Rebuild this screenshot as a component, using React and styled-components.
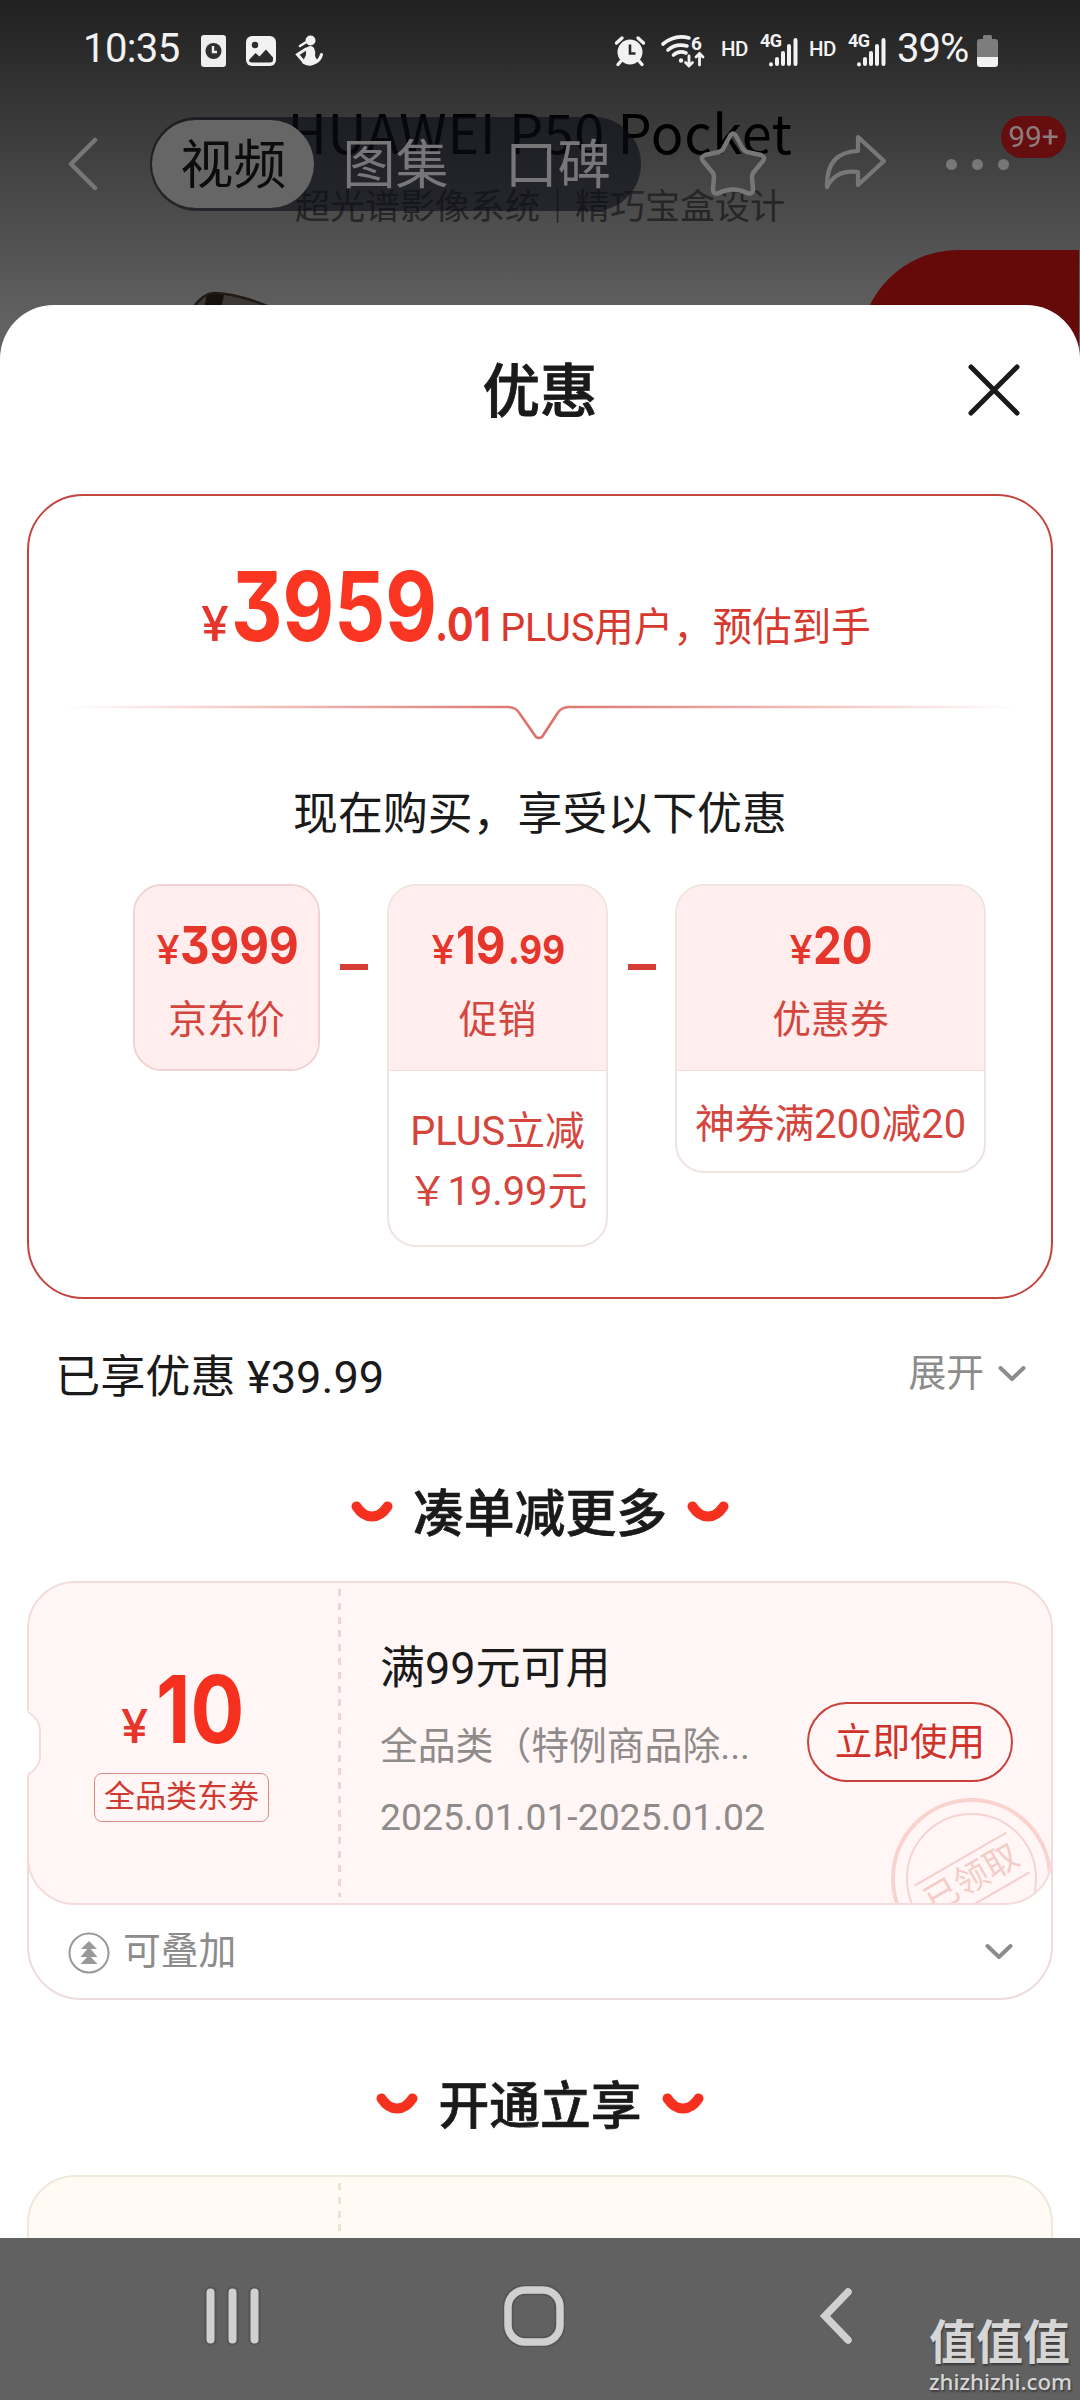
import React from 'react';
import styled, { createGlobalStyle } from 'styled-components';

const GlobalStyle = createGlobalStyle`
   *{
      box-sizing: border-box;
   }
   body{
      margin: 0;
      background: #616161;
      font-family: Roboto, "Noto Sans CJK SC", sans-serif;
   }
`

const Screen = styled.div`
   width: 1080px;
   height: 2400px;
   display: flex;
   flex-direction: column;
   overflow: hidden;
   background: linear-gradient(#202020 0, #383838 115px, #636363 330px, #616161 360px);
`

/* ---------- top of the page, dimmed behind the sheet ---------- */

const Top = styled.header`
   position: relative;
   height: 305px;
   flex: none;
`

const StatusBar = styled.div`
   height: 98px;
   padding: 0 82px 0 83px;
   display: flex;
   align-items: center;
   justify-content: space-between;
   color: #f2f2f2;
   font-size: 40px;
   line-height: 100px;
`

const StatusGroup = styled.div`
   display: flex;
   align-items: center;
   gap: ${props => props.$gap}px;
   height: 100%;
   svg{
      display: block;
      flex: none;
      overflow: visible;
      margin-top: 3px;
   }
`

const Clock = styled.span`
   width: 98px;
   letter-spacing: -0.6px;
`

const Sim = styled.span`
   display: flex;
   align-items: center;
   gap: 12px;
   width: 77px;
   margin-right: -5px;
`

const Hd = styled.span`
   width: 27px;
   font-size: 20.5px;
   font-weight: 500;
   letter-spacing: -0.6px;
`

const Network = styled.span`
   position: relative;
   display: flex;
   height: 98px;
   align-items: center;
   b{
      position: absolute;
      left: 0;
      top: 31px;
      font-size: 18px;
      font-weight: 700;
      line-height: 20px;
      letter-spacing: -0.5px;
   }
`

const Percent = styled.span`
   width: 71px;
   margin-right: -7px;
   letter-spacing: -1px;
`

const NavRow = styled.div`
   position: relative;
   z-index: 1;
   height: 94px;
   margin-top: 19px;
   padding: 0 68px;
   display: flex;
   align-items: center;
   svg{
      flex: none;
   }
`

const Tabs = styled.div`
   width: 491px;
   height: 94px;
   margin-left: 52px;
   padding: 3px 2px;
   display: flex;
   border-radius: 47px;
   background: rgba(12, 12, 24, 0.6);
`

const Tab = styled.div`
   width: 163px;
   height: 88px;
   border-radius: 44px;
   text-align: center;
   font-size: 53px;
   line-height: 92px;
   color: ${props => (props.$active ? '#0c0c0c' : '#77777a')};
   background: ${props => (props.$active ? '#666' : 'none')};
`

const StarWrap = styled.div`
   margin-left: 58px;
   height: 66px;
`

const ShareWrap = styled.div`
   margin-left: 57px;
   height: 60px;
`

const DotsWrap = styled.div`
   margin-left: 60px;
   display: flex;
   gap: 15px;
   i{
      width: 11px;
      height: 11px;
      border-radius: 50%;
      background: #777;
   }
`

const Badge = styled.div`
   position: absolute;
   left: 1001px;
   top: -1px;
   width: 65px;
   height: 42px;
   border-radius: 21px;
   background: #660d0f;
   color: #8d7c7c;
   text-align: center;
   font-size: 30px;
   line-height: 42px;
`

const Banner = styled.div`
   position: absolute;
   left: 0;
   top: 95px;
   width: 1080px;
   text-align: center;
   white-space: nowrap;
   font-family: "Noto Sans CJK SC", sans-serif;
`

const BannerTitle = styled.div`
   color: #000;
   font-size: 54px;
   line-height: 72px;
   letter-spacing: 0.6px;
`

const BannerText = styled.div`
   margin-top: 17px;
   font-size: 35px;
   line-height: 40px;
   color: #262626;
`

const RedCorner = styled.div`
   position: absolute;
   left: 860px;
   top: 250px;
   width: 219px;
   height: 120px;
   border-top-left-radius: 98px;
   background: #650909;
`

const PhoneEdge = styled.svg`
   position: absolute;
   left: 190px;
   top: 290px;
`

/* ---------- the sheet ---------- */

const Sheet = styled.main`
   position: relative;
   height: 1933px;
   flex: none;
   padding: 0 27px;
   overflow: hidden;
   border-radius: 54px 54px 0 0;
   background: #fff;
`

const SheetHead = styled.div`
   height: 189px;
   padding: 0 33px 18px 0;
   display: grid;
   grid-template-columns: 85px 1fr 52px;
   align-items: center;
   svg{
      margin-top: -2px;
   }
`

const SheetTitle = styled.h1`
   margin: 4px 0 0;
   text-align: center;
   font-size: 57.5px;
   font-weight: 500;
   -webkit-text-stroke: 0.9px #1a1a1a;
   line-height: 70px;
   color: #1a1a1a;
`

const PriceCard = styled.section`
   height: 805px;
   border: 2px solid #c2453e;
   border-radius: 56px;
`

const PriceLine = styled.div`
   height: 162px;
   padding: 62px 8px 0 0;
   display: flex;
   justify-content: center;
   align-items: baseline;
   color: #d8392f;
   font-size: 39.5px;
`

// digits are drawn narrower than the font has them
const Num = styled.span`
   display: inline-block;
   flex: none;
   width: ${props => props.$w}px;
   font-family: Inter, Roboto, sans-serif;
   font-feature-settings: "cv09" 1;
   font-size: ${props => props.$size}px;
   font-weight: ${props => props.$weight || 700};
   line-height: 1;
   white-space: nowrap;
   transform: scaleX(${props => props.$scale || 0.88});
   transform-origin: 0 50%;
   color: ${props => props.$color || '#e6352b'};
`

const Yen = styled(Num).attrs({ children: '¥', $weight: 500, $scale: 1.04 })``

const Divider = styled.svg`
   display: block;
   margin: 45px 0 0 36px;
`

const CardLabel = styled.h2`
   margin: 44px 0 0;
   text-align: center;
   font-size: 44.9px;
   font-weight: 400;
   line-height: 60px;
   color: #1a1a1a;
`

const Steps = styled.div`
   display: flex;
   align-items: flex-start;
   margin: 39px 0 0 104px;
`

const Minus = styled.div`
   width: 28px;
   height: 6px;
   margin: 80px 19px 0 20px;
   background: #d43c34;
`

const Step = styled.div`
   width: ${props => props.$w}px;
   overflow: hidden;
   border: 2px solid ${props => (props.$solo ? '#f2d2d0' : '#f0e4e0')};
   border-radius: 29px;
   background: #fff;
   text-align: center;
   color: #d4453d;
   font-size: 38.8px;
`

const StepTop = styled.div`
   height: ${props => (props.$solo ? 183 : 185)}px;
   padding-top: 34px;
   background: #ffeeed;
   border-bottom: ${props => (props.$solo ? 'none' : '1px solid #f5dedb')};
`

const StepPrice = styled.div`
   height: 56px;
   display: flex;
   justify-content: center;
   align-items: baseline;
`

const StepName = styled.div`
   margin-top: 15px;
   line-height: 58px;
`

const StepNote = styled.div`
   padding: ${props => props.$pad + 4}px 0 ${props => props.$pad - 4}px;
   font-size: 39.8px;
   line-height: 60px;
   white-space: nowrap;
`

const SavedRow = styled.div`
   height: 154px;
   padding: 0 27px 6px 28px;
   display: flex;
   justify-content: space-between;
   align-items: center;
   font-size: 45.2px;
   color: #1a1a1a;
`

const Expand = styled.div`
   display: flex;
   align-items: center;
   gap: 14px;
   margin-top: -7px;
   font-size: 37.8px;
   color: #8c8c8c;
   svg{
      margin-top: 9px;
   }
`

const SectionHead = styled.div`
   height: ${props => props.$h}px;
   padding-bottom: ${props => props.$drop || 0}px;
   padding-top: ${props => props.$lift || 0}px;
   display: flex;
   justify-content: center;
   align-items: center;
   gap: 20px;
   svg{
      margin-top: -6px;
   }
   h3{
      margin: 0;
      font-size: 50.8px;
      font-weight: 500;
      -webkit-text-stroke: 0.7px #1a1a1a;
      line-height: 60px;
      color: #1a1a1a;
   }
`

const Coupon = styled.section`
   position: relative;
   height: 419px;
   border: 2px solid #eddcdb;
   border-radius: 54px;
   background: #fff;
`

const CouponBody = styled.div`
   position: relative;
   height: 324px;
   margin: -2px -2px 0;
   overflow: hidden;
   display: flex;
   border: 2px solid #f3dcda;
   border-radius: 48px;
   background: #fff6f5;
`

const PlusCoupon = styled(CouponBody)`
   margin: 0;
   border-color: #efe9dc;
   background: #fffaf4;
`

const CouponLeft = styled.div`
   width: 309px;
   flex: none;
   display: flex;
   flex-direction: column;
   align-items: center;
   padding: 79px 4px 0 0;
`

const Dashes = styled.div`
   width: 3px;
   flex: none;
   margin: 6px 0;
   background: repeating-linear-gradient(${props => props.$color} 0 7px, transparent 7px 13.8px);
`

const CouponPrice = styled.div`
   height: 97px;
   display: flex;
   align-items: baseline;
`

const Tag = styled.div`
   width: 175px;
   height: 49px;
   margin-top: 14px;
   border: 1.5px solid #d98c88;
   border-radius: 8px;
   text-align: center;
   font-size: 31px;
   line-height: 46px;
   white-space: nowrap;
   color: #cf3a32;
`

const CouponInfo = styled.div`
   flex: 1;
   padding: 55px 0 0 39px;
   font-size: 37.8px;
   color: #8f8b8b;
   white-space: nowrap;
`

const CouponTitle = styled.div`
   font-size: 45px;
   line-height: 62px;
   color: #1a1a1a;
`

const CouponDesc = styled.div`
   margin-top: 17px;
   line-height: 58px;
`

const CouponDate = styled.div`
   margin-top: 17px;
   font-size: 37.3px;
   line-height: 50px;
`

const UseButton = styled.button`
   width: 206px;
   height: 80px;
   margin: 119px 38px 0 0;
   padding: 0;
   flex: none;
   border: 2px solid #c8423b;
   border-radius: 40px;
   background: none;
   font-family: inherit;
   font-size: 37.6px;
   line-height: 74px;
   color: #d0322a;
`

const Stamp = styled.div`
   position: absolute;
   left: 862px;
   top: 215px;
   width: 161px;
   height: 161px;
   display: flex;
   align-items: center;
   justify-content: center;
   border: 4px solid #fad3ce;
   border-radius: 50%;
   &::before{
      content: "";
      position: absolute;
      inset: 11px;
      border: 2px solid #f6d3d0;
      border-radius: 50%;
   }
`

const StampText = styled.span`
   width: 106px;
   height: 48px;
   transform: rotate(-30deg);
   border: solid #f4cfcc;
   border-width: 2px 0;
   text-align: center;
   font-size: 34px;
   line-height: 42px;
   white-space: nowrap;
   color: #f4cdc9;
`

const Notch = styled.svg`
   position: absolute;
   left: -3px;
   top: 128px;
`

const CouponFoot = styled.div`
   height: 95px;
   padding: 0 38px 1px 39px;
   display: flex;
   align-items: center;
   gap: 13px;
   font-size: 37.8px;
   line-height: 50px;
   color: #8c8c8c;
   svg{
      margin-top: 2px;
   }
   svg:last-child{
      margin: -1px 0 0 auto;
   }
`

const FootLabel = styled.span`
   margin-top: -2px;
`

/* ---------- system bar ---------- */

const SystemBar = styled.footer`
   position: relative;
   height: 162px;
   flex: none;
   display: flex;
   align-items: center;
   padding: 0 226px 0 202px;
   background: #616161;
   svg{
      flex: none;
      margin-top: -6px;
   }
   svg:nth-of-type(2){
      margin-left: 239px;
   }
   svg:nth-of-type(3){
      margin-left: auto;
   }
`

const Watermark = styled.div`
   position: absolute;
   left: 929px;
   top: 72px;
   width: 145px;
   color: #d6d6d6;
   text-shadow: 1px 2px 2px #3c3c3c;
   white-space: nowrap;
   font-family: "Noto Sans CJK SC", sans-serif;
   font-size: 47px;
   font-weight: 700;
   line-height: 58px;
   small{
      display: block;
      font-family: "Noto Sans", sans-serif;
      font-size: 22.2px;
      font-weight: 500;
      line-height: 28px;
   }
`

function Chevron(){
   return(
      <svg width="28" height="18" viewBox="0 0 28 18" fill="none">
         <path d="M2.5 3 L14 14 L25.5 3" stroke="#8c8c8c" strokeWidth="4" strokeLinecap="round" strokeLinejoin="round" />
      </svg>
   )
}

function Smile(){
   return(
      <svg width="42" height="22" viewBox="0 0 42 22" fill="none">
         <path d="M5.5 5.5 Q12 15.5 21 15.5 Q30 15.5 36.5 5.5" stroke="#f5301f" strokeWidth="10" strokeLinecap="round" />
      </svg>
   )
}

function SimStatus(){
   return(
      <Sim>
         <Hd>HD</Hd>
         <Network>
            <b>4G</b>
            <svg width="38" height="34" viewBox="0 0 38 34">
               <path d="M11 30.2 V30.4 M17 25 V30 M23 19 V30 M29 12 V30 M35.5 6 V30" stroke="#f2f2f2" strokeWidth="4" strokeLinecap="round" />
            </svg>
         </Network>
      </Sim>
   )
}

function Status(){
   return(
      <StatusBar>
         <StatusGroup $gap={20}>
            <Clock>10:35</Clock>
            <svg width="25" height="32" viewBox="0 0 25 32">
               <rect width="25" height="32" rx="3" fill="#eee" />
               <circle cx="12.5" cy="16" r="8" fill="#303030" />
               <path d="M12 11 V17 H16" stroke="#eee" strokeWidth="2.4" fill="none" />
            </svg>
            <svg width="30" height="30" viewBox="0 0 30 30">
               <rect width="30" height="30" rx="6" fill="#f2f2f2" />
               <circle cx="9" cy="9" r="3.2" fill="#2c2c2c" />
               <path d="M3 24 L9.5 17 L13.5 20.5 L20 13.5 L27 21.5 V24 Q27 26.5 24 26.5 H6 Q3 26.5 3 24 Z" fill="#2c2c2c" />
            </svg>
            <svg width="27" height="31" viewBox="0 0 27 31" fill="none" stroke="#f2f2f2" strokeLinecap="round">
               <circle cx="14.5" cy="5.5" r="5" fill="#f2f2f2" stroke="none" />
               <path d="M10 13 Q15 9 18 13 Q20 17 19 21 L22 27 Q14 34 6 28 L10 20 Z" fill="#f2f2f2" stroke="none" />
               <path d="M10 14 L1.5 19.5 L8 27 M20 27 Q24 25 25.5 19.5" strokeWidth="3" />
               <path d="M4 11 L9.5 7.5" strokeWidth="2.6" />
            </svg>
         </StatusGroup>
         <StatusGroup $gap={16}>
            <svg width="30" height="30" viewBox="0 0 30 30">
               <circle cx="15" cy="16" r="12.5" fill="#f2f2f2" />
               <path d="M1.5 7 L7 2 M28.5 7 L23 2 M6 25 L3 28.5 M24 25 L27 28.5" stroke="#f2f2f2" strokeWidth="3.4" strokeLinecap="round" />
               <path d="M15 8.5 V17.5 H20.5" stroke="#292929" strokeWidth="2.6" fill="none" />
            </svg>
            <svg width="44" height="34" viewBox="0 0 44 34" fill="none" stroke="#f2f2f2" strokeLinecap="round">
               <path d="M2 10 Q14 0 28 4 M7 16 Q15 9 26 12 M12.5 21 Q18 16 25 19" strokeWidth="3.6" />
               <circle cx="20" cy="26.5" r="2.2" fill="#f2f2f2" stroke="none" />
               <path d="M28 22 V32 M24.5 28.5 L28 32 L31.5 28.5 M38.5 31 V20 M35 23 L38.5 19.5 L42 23" strokeWidth="2.8" />
               <text x="30" y="15.5" fontSize="19" fontWeight="700" fontFamily="Roboto, sans-serif" fill="#f2f2f2" stroke="none">6</text>
            </svg>
            <SimStatus />
            <SimStatus />
            <Percent>39%</Percent>
            <svg width="21" height="32" viewBox="0 0 21 32">
               <path d="M6 4 V1.5 Q6 0 7.5 0 H13.5 Q15 0 15 1.5 V4 H18 Q21 4 21 7 V22 H0 V7 Q0 4 3 4 Z" fill="#7d7d7d" />
               <path d="M0 22 H21 V29 Q21 32 18 32 H3 Q0 32 0 29 Z" fill="#f2f2f2" />
            </svg>
         </StatusGroup>
      </StatusBar>
   )
}

function App(){
   return(
      <Screen>
         <GlobalStyle />

         <Top>
            <Banner>
               <BannerTitle>HUAWEI P50 Pocket</BannerTitle>
               <BannerText>超光谱影像系统｜精巧宝盒设计</BannerText>
            </Banner>
            <RedCorner />
            <PhoneEdge width="84" height="18" viewBox="0 0 84 18">
               <path d="M3 18 Q12 4 24 3 L34 4 Q60 8 82 18 Z" fill="#3d3835" />
               <path d="M14 18 L17 5 Q24 2 34 5 L31 18 Z" fill="#17110b" />
               <path d="M3 18 Q12 4 24 3 Q50 4 82 18" stroke="#211a12" strokeWidth="2.5" fill="none" />
            </PhoneEdge>

            <Status />

            <NavRow>
               <svg width="30" height="54" viewBox="0 0 30 54" fill="none">
                  <path d="M27 3 L3 27 L27 51" stroke="#777" strokeWidth="4.5" strokeLinecap="round" strokeLinejoin="round" />
               </svg>
               <Tabs>
                  <Tab $active>视频</Tab>
                  <Tab>图集</Tab>
                  <Tab>口碑</Tab>
               </Tabs>
               <StarWrap>
                  <svg width="68" height="66" viewBox="0 0 68 66" fill="none">
                     <path d="M31 5 Q34 0 37 5 L44 18 Q45 20 48 21 L62 24 Q67 26 64 30 L54 42 Q53 44 53 46 L54 58 Q54 64 48 62 Q34 55 20 62 Q14 64 14 58 L15 46 Q15 44 14 42 L4 30 Q1 26 6 24 L20 21 Q23 20 24 18 Z" stroke="#777" strokeWidth="4.5" strokeLinejoin="round" />
                  </svg>
               </StarWrap>
               <ShareWrap>
                  <svg width="62" height="56" viewBox="0 0 62 56" fill="none">
                     <path d="M34 3 L60 27 L34 51 V38 Q12 35 3 53 Q2 18 34 17 Z" stroke="#777" strokeWidth="4.2" strokeLinejoin="round" />
                  </svg>
               </ShareWrap>
               <DotsWrap>
                  <i /><i /><i />
               </DotsWrap>
               <Badge>99+</Badge>
            </NavRow>
         </Top>

         <Sheet>
            <SheetHead>
               <span />
               <SheetTitle>优惠</SheetTitle>
               <svg width="52" height="52" viewBox="0 0 52 52">
                  <path d="M3 3 L49 49 M49 3 L3 49" stroke="#1a1a1a" strokeWidth="5" strokeLinecap="round" />
               </svg>
            </SheetHead>

            <PriceCard>
               <PriceLine>
                  <Yen $size={48} $w={30} />
                  <Num $size={96} $w={204} $scale={0.83} $color="#fa3622">3959</Num>
                  <Num $size={47} $w={65} $scale={0.84}>.01</Num>
                  PLUS用户，预估到手
               </PriceLine>
               <Divider width="952" height="38" viewBox="0 0 952 38" fill="none">
                  <defs>
                     <linearGradient id="fade" gradientUnits="userSpaceOnUse" x1="0" y1="0" x2="952" y2="0">
                        <stop offset="0" stopColor="#dc6f69" stopOpacity="0" />
                        <stop offset="0.5" stopColor="#dc6f69" />
                        <stop offset="1" stopColor="#dc6f69" stopOpacity="0" />
                     </linearGradient>
                  </defs>
                  <path d="M0 4 H443 Q451 4 455 11 L471 34 Q474 36 477 34 L492 11 Q496 4 504 4 H952" stroke="url(#fade)" strokeWidth="2.6" />
               </Divider>
               <CardLabel>现在购买，享受以下优惠</CardLabel>

               <Steps>
                  <Step $w={187} $solo>
                     <StepTop $solo>
                        <StepPrice>
                           <Yen $size={40} $w={25} />
                           <Num $size={52} $w={119}>3999</Num>
                        </StepPrice>
                        <StepName>京东价</StepName>
                     </StepTop>
                  </Step>
                  <Minus />
                  <Step $w={221}>
                     <StepTop>
                        <StepPrice>
                           <Yen $size={40} $w={27} />
                           <Num $size={52} $w={52}>19</Num>
                           <Num $size={40} $w={58}>.99</Num>
                        </StepPrice>
                        <StepName>促销</StepName>
                     </StepTop>
                     <StepNote $pad={27}>
                        PLUS立减<br />￥19.99元
                     </StepNote>
                  </Step>
                  <Minus />
                  <Step $w={311}>
                     <StepTop>
                        <StepPrice>
                           <Yen $size={40} $w={25} />
                           <Num $size={52} $w={60}>20</Num>
                        </StepPrice>
                        <StepName>优惠券</StepName>
                     </StepTop>
                     <StepNote $pad={20}>神券满200减20</StepNote>
                  </Step>
               </Steps>
            </PriceCard>

            <SavedRow>
               <span>已享优惠 ¥39.99</span>
               <Expand>
                  展开
                  <Chevron />
               </Expand>
            </SavedRow>

            <SectionHead $h={128} $drop={5}>
               <Smile />
               <h3>凑单减更多</h3>
               <Smile />
            </SectionHead>

            <Coupon>
               <CouponBody>
                  <CouponLeft>
                     <CouponPrice>
                        <Yen $size={47} $w={35} />
                        <Num $size={94} $w={86} $scale={0.85} $color="#f5301f">10</Num>
                     </CouponPrice>
                     <Tag>全品类东券</Tag>
                  </CouponLeft>
                  <Dashes $color="#efd5d4" />
                  <CouponInfo>
                     <CouponTitle>满99元可用</CouponTitle>
                     <CouponDesc>全品类（特例商品除...</CouponDesc>
                     <CouponDate>2025.01.01-2025.01.02</CouponDate>
                  </CouponInfo>
                  <UseButton>立即使用</UseButton>
                  <Stamp>
                     <StampText>已领取</StampText>
                  </Stamp>
               </CouponBody>
               <CouponFoot>
                  <svg width="42" height="42" viewBox="0 0 42 42">
                     <circle cx="21" cy="21" r="19.5" fill="none" stroke="#999" strokeWidth="2" />
                     <path d="M21 9 L29 17 H13 Z M21 15 L29.5 25 H12.5 Z M21 23 L29.5 32 H12.5 Z" fill="#999" />
                  </svg>
                  <FootLabel>可叠加</FootLabel>
                  <Chevron />
               </CouponFoot>
               <Notch width="16" height="66" viewBox="0 0 16 66">
                  <path d="M0 0 H2 Q14 8 14 20 V46 Q14 55 2 64 H0 Z" fill="#fff" />
                  <path d="M2 1 Q14 8 14 20 V46 Q14 55 2 64" fill="none" stroke="#f0dfde" strokeWidth="2" />
               </Notch>
            </Coupon>

            <SectionHead $h={175} $lift={38}>
               <Smile />
               <h3>开通立享</h3>
               <Smile />
            </SectionHead>

            <PlusCoupon>
               <CouponLeft />
               <Dashes $color="#ede3d2" />
            </PlusCoupon>
         </Sheet>

         <SystemBar>
            <svg width="62" height="62" viewBox="0 0 62 62">
               <path d="M8.5 7.5 V54.5 M30.5 7.5 V54.5 M52.5 7.5 V54.5" stroke="#555" strokeWidth="12" strokeLinecap="round" />
               <path d="M8.5 7.5 V54.5 M30.5 7.5 V54.5 M52.5 7.5 V54.5" stroke="#d0d0d0" strokeWidth="8" strokeLinecap="round" />
            </svg>
            <svg width="62" height="62" viewBox="0 0 62 62">
               <rect x="5" y="5" width="52" height="52" rx="17" fill="none" stroke="#555" strokeWidth="11" />
               <rect x="5" y="5" width="52" height="52" rx="17" fill="none" stroke="#d0d0d0" strokeWidth="7.5" />
            </svg>
            <svg width="36" height="62" viewBox="0 0 36 62">
               <path d="M30 7 L7 31 L30 55" fill="none" stroke="#d0d0d0" strokeWidth="7.5" strokeLinecap="round" />
            </svg>
            <Watermark>
               值值值
               <small>zhizhizhi.com</small>
            </Watermark>
         </SystemBar>
      </Screen>
   )
}

export default App;
